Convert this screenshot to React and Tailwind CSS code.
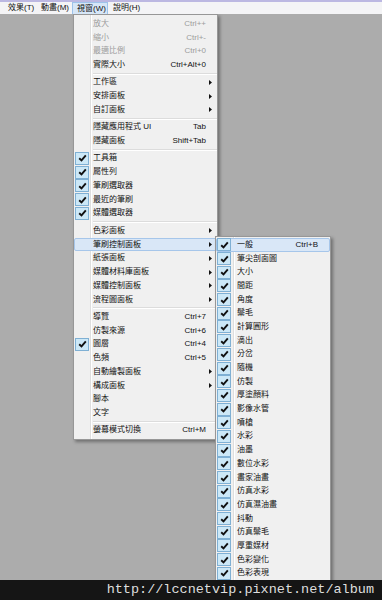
const font = { fontFamily: '"Liberation Sans", "Noto Sans CJK TC", sans-serif' };

const mainMenu = [
  { label: '放大', sc: 'Ctrl++', disabled: true },
  { label: '縮小', sc: 'Ctrl+-', disabled: true },
  { label: '最適比例', sc: 'Ctrl+0', disabled: true },
  { label: '實際大小', sc: 'Ctrl+Alt+0' },
  'sep',
  { label: '工作區', sub: true },
  { label: '安排面板', sub: true },
  { label: '自訂面板', sub: true },
  'sep',
  { label: '隱藏應用程式 UI', sc: 'Tab' },
  { label: '隱藏面板', sc: 'Shift+Tab' },
  'sep',
  { label: '工具箱', checked: true },
  { label: '屬性列', checked: true },
  { label: '筆刷選取器', checked: true },
  { label: '最近的筆刷', checked: true },
  { label: '媒體選取器', checked: true },
  'sep',
  { label: '色彩面板', sub: true },
  { label: '筆刷控制面板', sub: true, active: true },
  { label: '紙張面板', sub: true },
  { label: '媒體材料庫面板', sub: true },
  { label: '媒體控制面板', sub: true },
  { label: '流程圖面板', sub: true },
  'sep',
  { label: '導覽', sc: 'Ctrl+7' },
  { label: '仿製來源', sc: 'Ctrl+6' },
  { label: '圖層', sc: 'Ctrl+4', checked: true },
  { label: '色頻', sc: 'Ctrl+5' },
  { label: '自動繪製面板', sub: true },
  { label: '構成面板', sub: true },
  { label: '腳本' },
  { label: '文字' },
  'sep',
  { label: '螢幕模式切換', sc: 'Ctrl+M' },
];

// last entry sits under the watermark bar, only its check box peeks out
const brushPanels = [
  '一般', '筆尖剖面圖', '大小', '間距', '角度', '鬃毛', '計算圓形', '滴出', '分岔', '隨機',
  '仿製', '厚塗顏料', '影像水管', '噴槍', '水彩', '油墨', '數位水彩', '畫家油畫', '仿真水彩',
  '仿真濕油畫', '抖動', '仿真鬃毛', '厚重媒材', '色彩變化', '色彩表現', '',
];

const CheckBox = () => (
  <div className="w-[14px] h-[13px] bg-[#cce8f7] border border-[#7fb0d4] flex items-center justify-center">
    <svg width="9" height="8" viewBox="0 0 9 8">
      <path d="M1.2 4.2 L3.5 6.4 L7.8 1.4" fill="none" stroke="#111" strokeWidth="1.9" />
    </svg>
  </div>
);

const Arrow = () => (
  <svg width="3" height="5" viewBox="0 0 3 5">
    <path d="M0 0 L3 2.5 L0 5Z" fill="#111" />
  </svg>
);

const MainRow = ({ item }) => (
  <div
    className={`flex items-center h-[13.75px] ${
      item.active ? 'bg-[#d9e7f7] border border-[#a6c6ea] rounded-[2px]' : 'border border-transparent'
    } ${item.disabled ? 'text-[#9c9c9c]' : 'text-[#111]'}`}
  >
    <div className="w-[15px] flex items-center">{item.checked && <CheckBox />}</div>
    <span className="ml-[3px] flex-1 whitespace-nowrap">{item.label}</span>
    <span className="whitespace-nowrap">{item.sc}</span>
    <div className="w-[10px] pl-[3px] flex items-center">{item.sub && <Arrow />}</div>
  </div>
);

const Separator = ({ inset }) => (
  <div className={`h-[3.6px] flex flex-col justify-center ${inset}`}>
    <div className="h-px bg-[#dcdcdc]" />
    <div className="h-px bg-white" />
  </div>
);

export default function App() {
  return (
    <div className="w-[382px] h-[600px] flex flex-col bg-[#acacac] text-[8px] leading-none overflow-hidden" style={font}>
      <div className="h-[2px] bg-[#bcb8e2]" />
      <div className="h-[12px] bg-[#f4f4f6] flex items-stretch pl-[4px] text-[#111]">
        <div className="w-[32px] pl-[4px] flex items-center">效果(T)</div>
        <div className="w-[36px] pl-[5px] flex items-center">動畫(M)</div>
        <div className="w-[36px] pl-[4px] flex items-center bg-[#d6e6f7] border border-b-0 border-[#9ec3ea]">視窗(W)</div>
        <div className="pl-[5px] flex items-center">說明(H)</div>
      </div>

      <div className="relative flex-1 overflow-hidden">
        {/* main menu */}
        <div className="absolute left-[73px] top-0 w-[145px] bg-[linear-gradient(to_right,#f0f0f0_16px,#dedede_16px,#dedede_17px,#ffffff_17px,#ffffff_18px,#f0f0f0_18px)] border border-[#979797] shadow-[2px_2px_3px_rgba(0,0,0,0.35)] pt-[2px] pb-[2px]">
          {mainMenu.map((item, i) =>
            item === 'sep' ? <Separator key={i} inset="ml-[19px]" /> : <MainRow key={i} item={item} />
          )}
        </div>

        {/* brush control submenu */}
        <div className="absolute left-[215px] top-[222px] w-[116px] bg-[linear-gradient(to_right,#f0f0f0_17px,#dedede_17px,#dedede_18px,#ffffff_18px,#ffffff_19px,#f0f0f0_19px)] border border-[#979797] shadow-[2px_2px_3px_rgba(0,0,0,0.35)] pt-[1px]">
          {brushPanels.map((label, i) => (
            <div
              key={i}
              className={`flex items-center h-[13.7px] text-[#111] border ${
                i === 0 ? 'bg-[#d9e7f7] border-[#a6c6ea] rounded-[2px]' : 'border-transparent'
              }`}
            >
              <div className="w-[15px] flex items-center">
                <CheckBox />
              </div>
              <span className="ml-[5px] flex-1 whitespace-nowrap">{label}</span>
              {i === 0 && <span className="mr-[11px]">Ctrl+B</span>}
            </div>
          ))}
        </div>
      </div>

      <div className="h-[20px] bg-[#151515] flex items-center justify-end pr-[8px] text-[13.5px] text-[#dedede]" style={{ fontFamily: '"Liberation Mono", monospace' }}>
        http://lccnetvip.pixnet.net/album
      </div>
    </div>
  );
}
